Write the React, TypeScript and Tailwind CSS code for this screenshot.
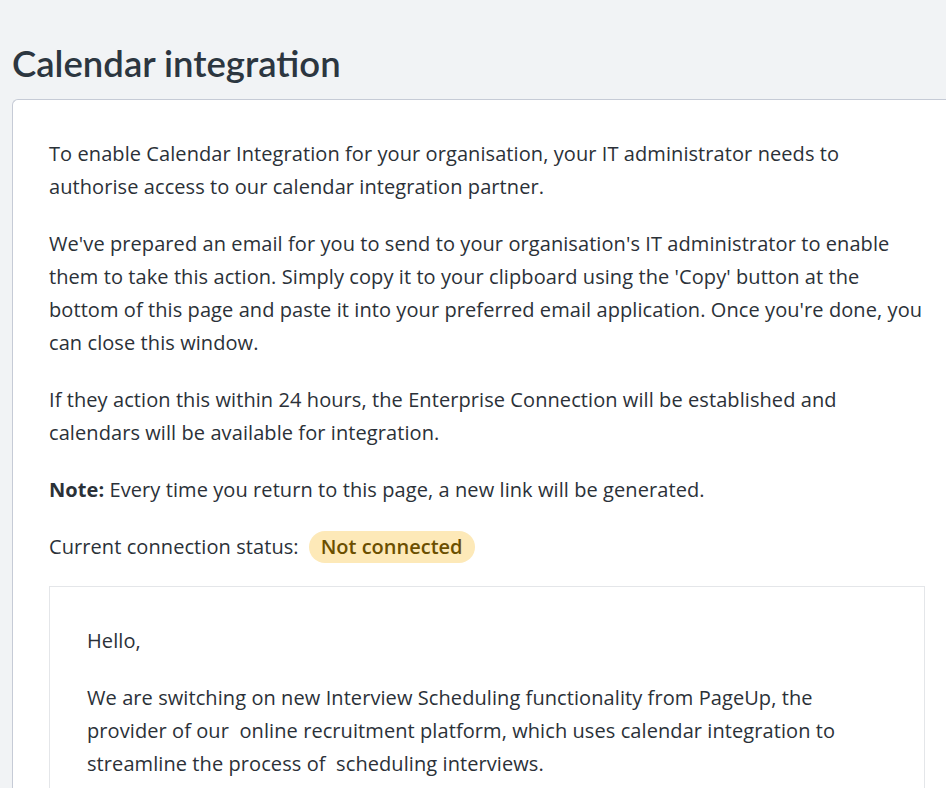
import React from 'react';

const emailParagraphs = [
  'Hello,',
  'We are switching on new Interview Scheduling functionality from PageUp, the provider of our \u00a0online recruitment platform, which uses calendar integration to streamline the process of \u00a0scheduling interviews.',
];

export default function App() {
  return (
    <div
      className="min-h-screen bg-[#f1f3f5] pl-3 pt-[41px] text-[#2b3138]"
      style={{ fontFamily: '"Open Sans", Lato, sans-serif' }}
    >
      {/* Page title */}
      <h1
        className="text-[36.5px] leading-[44px] font-semibold text-[#2c3640] mb-[14px]"
        style={{ fontFamily: 'Lato, "Open Sans", sans-serif' }}
      >
        Calendar integration
      </h1>

      {/* Main card */}
      <div className="bg-white border-t border-l border-[#c6cbd6] rounded-tl-md pl-[36px] pr-[21px] pt-[37px]">
        <div className="text-[20px] leading-[33px] tracking-[0.004em] space-y-6">
          <p>
            To enable Calendar Integration for your organisation, your IT administrator needs to
            authorise access to our calendar integration partner.
          </p>
          <p>
            We've prepared an email for you to send to your organisation's IT administrator to enable
            them to take this action. Simply copy it to your clipboard using the 'Copy' button at the
            bottom of this page and paste it into your preferred email application. Once you're done, you
            can close this window.
          </p>
          <p>
            If they action this within 24 hours, the Enterprise Connection will be established and
            calendars will be available for integration.
          </p>
          <p>
            <span className="font-bold">Note:</span> Every time you return to this page, a new link will be
            generated.
          </p>
          <div className="flex items-center gap-[10px]">
            <span>Current connection status:</span>
            <span className="inline-flex items-center h-8 px-[12px] rounded-full bg-[#fde9b8] text-[#6b4f00] font-semibold tracking-normal">
              Not connected
            </span>
          </div>
        </div>

        {/* Email template */}
        <div className="mt-[23px] border-t border-l border-r border-[#e4e6e9] px-[37px] pt-[37px] pb-4 text-[20px] leading-[33px] tracking-[0.004em] space-y-6">
          {emailParagraphs.map((text, i) => (
            <p key={i}>{text}</p>
          ))}
        </div>
      </div>
    </div>
  );
}
